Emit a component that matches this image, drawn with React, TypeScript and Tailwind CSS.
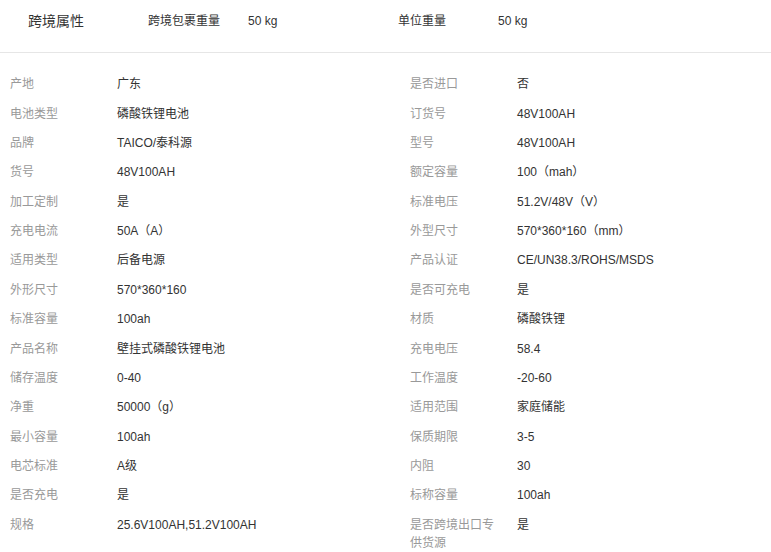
const rows: [string, string, string, string][] = [
  ['产地', '广东', '是否进口', '否'],
  ['电池类型', '磷酸铁锂电池', '订货号', '48V100AH'],
  ['品牌', 'TAICO/泰科源', '型号', '48V100AH'],
  ['货号', '48V100AH', '额定容量', '100（mah）'],
  ['加工定制', '是', '标准电压', '51.2V/48V（V）'],
  ['充电电流', '50A（A）', '外型尺寸', '570*360*160（mm）'],
  ['适用类型', '后备电源', '产品认证', 'CE/UN38.3/ROHS/MSDS'],
  ['外形尺寸', '570*360*160', '是否可充电', '是'],
  ['标准容量', '100ah', '材质', '磷酸铁锂'],
  ['产品名称', '壁挂式磷酸铁锂电池', '充电电压', '58.4'],
  ['储存温度', '0-40', '工作温度', '-20-60'],
  ['净重', '50000（g）', '适用范围', '家庭储能'],
  ['最小容量', '100ah', '保质期限', '3-5'],
  ['电芯标准', 'A级', '内阻', '30'],
  ['是否充电', '是', '标称容量', '100ah'],
  ['规格', '25.6V100AH,51.2V100AH', '是否跨境出口专供货源', '是'],
]

export default function App() {
  return (
    <div className="h-[552px] w-[771px] overflow-hidden bg-white font-['Liberation_Sans','Noto_Sans_CJK_SC',sans-serif] text-[12px] text-[#333]">
      <div className="flex h-[53px] items-center border-b border-[#e6e6e6] pb-[10px]">
        <div className="ml-[28px] w-[120px] text-[14px] text-[#333]">跨境属性</div>
        <div className="w-[100px]">跨境包裹重量</div>
        <div className="w-[150px]">50 kg</div>
        <div className="w-[100px]">单位重量</div>
        <div>50 kg</div>
      </div>
      <div className="grid grid-cols-[400px_1fr] pt-[16.5px]">
        {rows.map(([l1, v1, l2, v2]) => (
          <Row key={l1 + l2} a={[l1, v1]} b={[l2, v2]} />
        ))}
      </div>
    </div>
  )
}

function Row({ a, b }: { a: [string, string]; b: [string, string] }) {
  return (
    <>
      <Cell label={a[0]} value={a[1]} />
      <Cell label={b[0]} value={b[1]} />
    </>
  )
}

function Cell({ label, value }: { label: string; value: string }) {
  return (
    <div className="flex items-start pl-[10px] py-[5.7px] leading-[18px]">
      <div className="w-[90px] shrink-0 text-[#999]">{label}</div>
      <div className="ml-[17px]">{value}</div>
    </div>
  )
}
